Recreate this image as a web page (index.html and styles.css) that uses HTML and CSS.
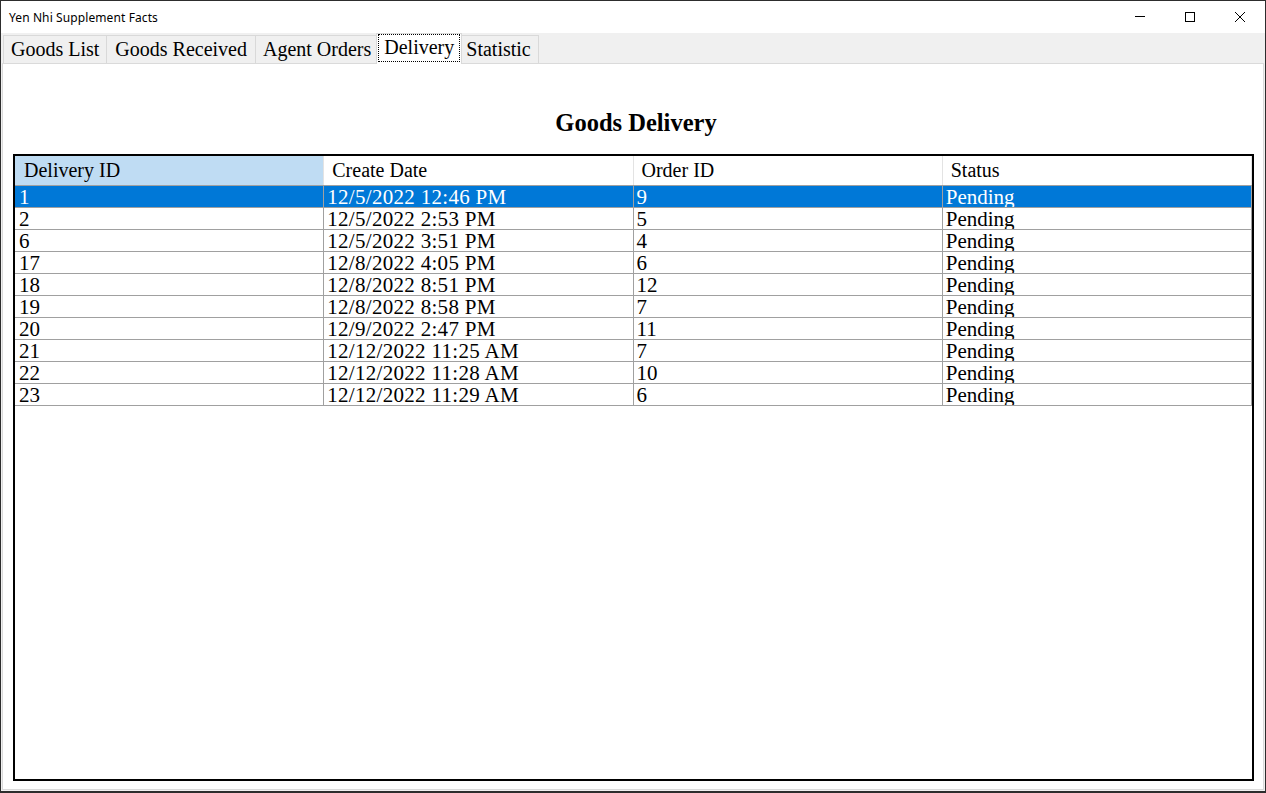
FILE: index.html
```html
<!DOCTYPE html>
<html lang="en">
<head>
<meta charset="utf-8">
<title>Yen Nhi Supplement Facts</title>
<link rel="stylesheet" href="styles.css">
</head>
<body>
<div class="window">
  <div class="titlebar">
    <span class="title">Yen Nhi Supplement Facts</span>
    <div class="controls">
      <span class="ctl"><svg width="10" height="10" viewBox="0 0 10 10"><path d="M0 4.5H10" stroke="#000" stroke-width="1" fill="none"/></svg></span>
      <span class="ctl"><svg width="10" height="10" viewBox="0 0 10 10"><rect x="0.5" y="0.5" width="9" height="9" stroke="#000" stroke-width="1" fill="none"/></svg></span>
      <span class="ctl"><svg width="10" height="10" viewBox="0 0 10 10"><path d="M0 0L10 10M10 0L0 10" stroke="#000" stroke-width="1" fill="none"/></svg></span>
    </div>
  </div>
  <div class="tabstrip">
    <div class="tab">Goods List</div>
    <div class="tab">Goods Received</div>
    <div class="tab">Agent Orders</div>
    <div class="tab active"><span class="focus">Delivery</span></div>
    <div class="tab">Statistic</div>
  </div>
  <div class="page">
    <h1 class="heading">Goods Delivery</h1>
    <div class="grid">
      <div class="row head">
        <div class="cell current">Delivery ID</div>
        <div class="cell">Create Date</div>
        <div class="cell">Order ID</div>
        <div class="cell">Status</div>
      </div>
      <div class="row selected">
        <div class="cell">1</div><div class="cell">12/5/2022 12:46 PM</div><div class="cell">9</div><div class="cell">Pending</div>
      </div>
      <div class="row">
        <div class="cell">2</div><div class="cell">12/5/2022 2:53 PM</div><div class="cell">5</div><div class="cell">Pending</div>
      </div>
      <div class="row">
        <div class="cell">6</div><div class="cell">12/5/2022 3:51 PM</div><div class="cell">4</div><div class="cell">Pending</div>
      </div>
      <div class="row">
        <div class="cell">17</div><div class="cell">12/8/2022 4:05 PM</div><div class="cell">6</div><div class="cell">Pending</div>
      </div>
      <div class="row">
        <div class="cell">18</div><div class="cell">12/8/2022 8:51 PM</div><div class="cell">12</div><div class="cell">Pending</div>
      </div>
      <div class="row">
        <div class="cell">19</div><div class="cell">12/8/2022 8:58 PM</div><div class="cell">7</div><div class="cell">Pending</div>
      </div>
      <div class="row">
        <div class="cell">20</div><div class="cell">12/9/2022 2:47 PM</div><div class="cell">11</div><div class="cell">Pending</div>
      </div>
      <div class="row">
        <div class="cell">21</div><div class="cell">12/12/2022 11:25 AM</div><div class="cell">7</div><div class="cell">Pending</div>
      </div>
      <div class="row">
        <div class="cell">22</div><div class="cell">12/12/2022 11:28 AM</div><div class="cell">10</div><div class="cell">Pending</div>
      </div>
      <div class="row">
        <div class="cell">23</div><div class="cell">12/12/2022 11:29 AM</div><div class="cell">6</div><div class="cell">Pending</div>
      </div>
    </div>
  </div>
</div>
</body>
</html>
```
FILE: styles.css
```css
* { box-sizing: border-box; }
html, body { margin: 0; padding: 0; }
body { width: 1266px; height: 793px; overflow: hidden; background: #ffffff; }

.window {
  width: 1266px;
  height: 793px;
  border: 1px solid #2d2d2d;
  border-bottom-width: 2px;
  background: #f0f0f0;
  display: flex;
  flex-direction: column;
}

.titlebar {
  flex: none;
  height: 32px;
  background: #ffffff;
  display: flex;
  align-items: flex-start;
}
.title {
  flex: 1;
  font-family: "Noto Sans", "Open Sans", sans-serif;
  font-size: 12px;
  line-height: 32px;
  padding: 1px 0 0 8px;
  letter-spacing: 0.1px;
  color: #000;
}
.controls { display: flex; }
.ctl {
  width: 50px;
  height: 32px;
  display: flex;
  align-items: center;
  justify-content: center;
}
.ctl svg { display: block; }

.tabstrip {
  flex: none;
  height: 30px;
  display: flex;
  align-items: flex-start;
  padding-left: 2px;
  position: relative;
  z-index: 2;
  font-family: "Liberation Serif", "Times New Roman", serif;
  font-size: 20px;
  color: #000;
}
.tab {
  margin-top: 2px;
  height: 28px;
  line-height: 26px;
  padding: 0 7px;
  border: 1px solid #d9d9d9;
  border-bottom: none;
  margin-right: -1px;
  background: #f0f0f0;
  white-space: nowrap;
}
.tab:nth-child(2) { padding: 0 8px; }
.tab.active {
  margin-top: 0;
  height: 31px;
  margin-left: -2px;
  margin-right: -4px;
  padding: 0 1px;
  background: #ffffff;
  position: relative;
  z-index: 3;
}
.focus {
  display: block;
  border: 1px dotted #000;
  line-height: 24px;
  padding: 0 5px 2px;
}

.page {
  flex: 1;
  margin: 0 1px 1px 1px;
  border: 1px solid #dadada;
  background: #ffffff;
  display: flex;
  flex-direction: column;
  padding: 0 9px 8px 10px;
  min-height: 0;
}
.heading {
  margin: 45px 0 17px;
  padding-left: 5px;
  text-align: center;
  font-family: "Liberation Serif", "Times New Roman", serif;
  font-weight: bold;
  font-size: 24.5px;
  line-height: 28px;
  color: #000;
}

.grid {
  flex: 1;
  border: 2px solid #000;
  background: #ffffff;
  font-family: "Liberation Serif", "Times New Roman", serif;
  color: #000;
  overflow: hidden;
}
.row {
  display: grid;
  grid-template-columns: repeat(4, 1fr);
  height: 22px;
  border-bottom: 1px solid #a0a0a0;
  font-size: 21px;
  line-height: 22px;
}
.row .cell {
  border-right: 1px solid #a0a0a0;
  padding-left: 3px;
  white-space: nowrap;
  overflow: hidden;
}
.row .cell:first-child { padding-left: 4px; }
.row .cell:nth-child(2) { letter-spacing: 0.3px; }

.row.head {
  height: 30px;
  font-size: 20px;
  line-height: 29px;
  border-bottom: 1px solid #a0a0a0;
}
.row.head .cell {
  border-right: 1px solid #e3e3e3;
  padding-left: 8px;
  letter-spacing: 0;
}
.row.head .cell:first-child { padding-left: 9px; }
.row.head .cell.current { background: #bfdcf3; }

.row.selected { background: #0078d7; color: #ffffff; }
```
